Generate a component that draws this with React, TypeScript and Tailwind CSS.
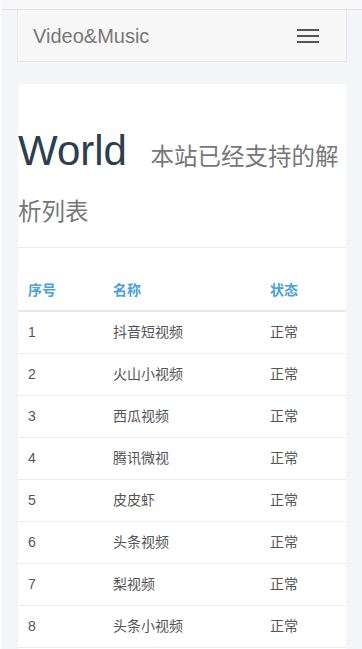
import React from 'react';

const rows = [
  ['1', '抖音短视频'],
  ['2', '火山小视频'],
  ['3', '西瓜视频'],
  ['4', '腾讯微视'],
  ['5', '皮皮虾'],
  ['6', '头条视频'],
  ['7', '梨视频'],
  ['8', '头条小视频'],
  ['9', '最右'],
  ['10', '快手'],
];

const cjk = '"Liberation Sans", "Noto Sans CJK SC", sans-serif';

export default function App() {
  return (
    <div className="min-h-screen bg-[#f4f5f8] border-l-2 border-[#fbfbfb]" style={{ fontFamily: cjk }}>
      <div className="h-[10px] bg-[#f8f8f8] border-b border-[#e4e4e4]" />

      <div className="px-[15px]">
        {/* Navbar */}
        <div className="h-[52px] flex items-center justify-between bg-[#f7f7f7] border border-t-0 border-[#e7e7e7] pl-[15px] pr-[27px]">
          <span className="text-[20px] text-[#777]">Video&amp;Music</span>
          <button className="flex flex-col gap-[4px]">
            <span className="block w-[22px] h-[2px] bg-[#555]" />
            <span className="block w-[22px] h-[2px] bg-[#555]" />
            <span className="block w-[22px] h-[2px] bg-[#555]" />
          </button>
        </div>

        {/* Card */}
        <div className="mt-[22px] mx-[1px] bg-white rounded-[3px]">
          <div className="pt-[39px] pb-[14px] border-b border-[#eee]">
            <h1 className="text-[42px] leading-[55px] text-[#2c3e50] font-normal">
              World{' '}
              <small className="ml-[12px] text-[23.5px] leading-none text-[#777]">
                本站已经支持的解析列表
              </small>
            </h1>
          </div>

          <table className="w-full table-fixed mt-[26px] text-[14px]">
            <thead>
              <tr className="border-b-2 border-[#e8e8e8]">
                <th className="w-[85px] h-[37px] align-bottom pb-[9px] pl-[10px] text-left font-bold text-[#4aa0df]">序号</th>
                <th className="w-[157px] align-bottom pb-[9px] pl-[10px] text-left font-bold text-[#4aa0df]">名称</th>
                <th className="align-bottom pb-[9px] pl-[10px] text-left font-bold text-[#4aa0df]">状态</th>
              </tr>
            </thead>
            <tbody>
              {rows.map(([n, name], i) => (
                <tr key={n} className={i === 0 ? '' : 'border-t border-[#eee]'}>
                  <td className="h-[42px] pl-[10px] text-[#555]">{n}</td>
                  <td className="pl-[10px] text-[#555]">{name}</td>
                  <td className="pl-[10px] text-[#555]">正常</td>
                </tr>
              ))}
            </tbody>
          </table>
        </div>
      </div>
    </div>
  );
}
